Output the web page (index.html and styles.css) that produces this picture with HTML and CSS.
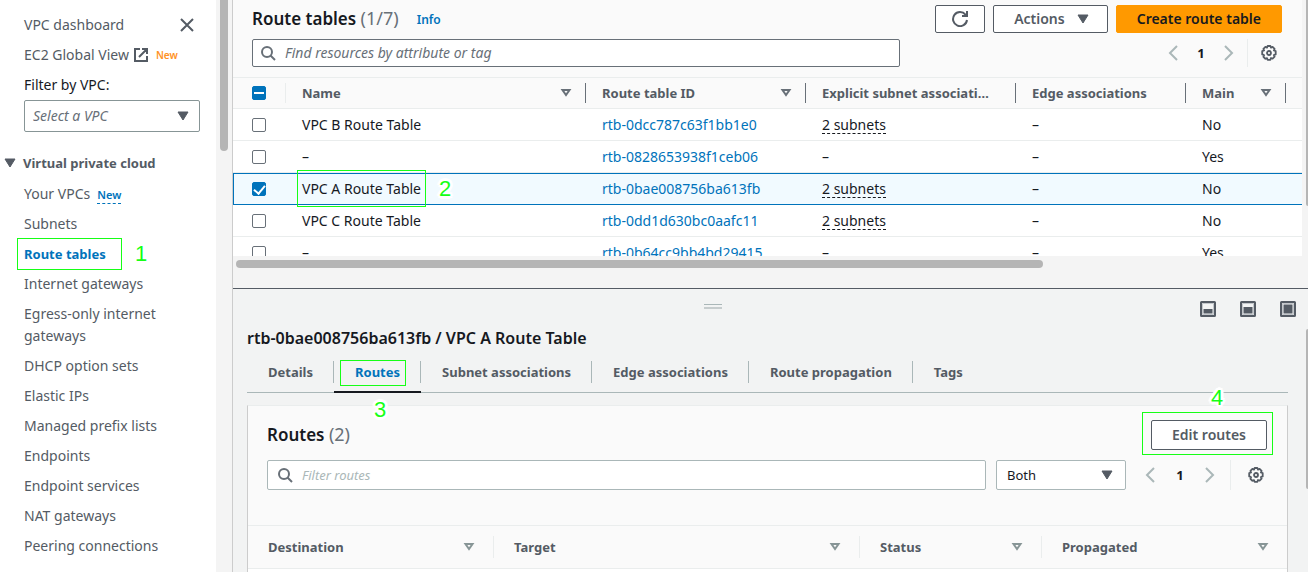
FILE: index.html
```html
<!DOCTYPE html>
<html lang="en">
<head>
<meta charset="utf-8">
<meta name="viewport" content="width=device-width, initial-scale=1">
<title>Route tables | VPC Management Console</title>
<link rel="stylesheet" href="styles.css">
</head>
<body>
<svg class="sprite" aria-hidden="true">
  <symbol id="i-close" viewBox="0 0 16 16"><path d="M2 2l12 12M14 2L2 14" fill="none" stroke="currentColor" stroke-width="2"/></symbol>
  <symbol id="i-external" viewBox="0 0 16 16"><path d="M7 2H2v12h12V9M9 2h5v5M14 2L6 10" fill="none" stroke="currentColor" stroke-width="2"/></symbol>
  <symbol id="i-caret" viewBox="0 0 12 10"><path d="M1 1h10L6 9z" fill="currentColor" stroke="currentColor" stroke-linejoin="round"/></symbol>
  <symbol id="i-sort" viewBox="0 0 12 10"><path d="M2.500 2h7L6 7z" fill="none" stroke="currentColor" stroke-width="2"/></symbol>
  <symbol id="i-search" viewBox="0 0 16 16"><circle cx="7" cy="7" r="5" fill="none" stroke="currentColor" stroke-width="2"/><path d="M10.500 10.500L15 15" stroke="currentColor" stroke-width="2"/></symbol>
  <symbol id="i-refresh" viewBox="0 0 16 16"><path d="M10 5h5V0M15 9a7 7 0 1 1-1.500-5.300l1.500 1.300" fill="none" stroke="currentColor" stroke-width="2"/></symbol>
  <symbol id="i-prev" viewBox="0 0 16 16"><path d="M12 1L5 8l7 7" fill="none" stroke="currentColor" stroke-width="2"/></symbol>
  <symbol id="i-next" viewBox="0 0 16 16"><path d="M4 1l7 7-7 7" fill="none" stroke="currentColor" stroke-width="2"/></symbol>
  <symbol id="i-gear" viewBox="0 0 16 16"><path d="M6.600 1h2.800l.6 1.600 1.600-.7 2 2-.7 1.600 1.800.7v3.200l-1.800.7.700 1.600-2 2-1.600-.7-.6 1.800H6.600L6 13.100l-1.600.7-2-2 .7-1.600L1.200 9.400V6.200l1.900-.7-.7-1.600 2-2 1.600.7z" fill="none" stroke="currentColor" stroke-width="1.800" stroke-linejoin="round"/><circle cx="8" cy="8" r="2" fill="none" stroke="currentColor" stroke-width="1.800"/></symbol>
  <symbol id="i-panel-s" viewBox="0 0 16 16"><rect x="1" y="1" width="14" height="14" rx=".5" fill="none" stroke="currentColor" stroke-width="2"/><path d="M2.500 2.500h11v11h-11z" fill="none" stroke="#c3c7cb"/><path d="M3.500 8h9v4.500h-9z" fill="currentColor"/></symbol>
  <symbol id="i-panel-m" viewBox="0 0 16 16"><rect x="1" y="1" width="14" height="14" rx=".5" fill="none" stroke="currentColor" stroke-width="2"/><path d="M2.500 2.500h11v11h-11z" fill="none" stroke="#c3c7cb"/><path d="M3.500 6h9v6.500h-9z" fill="currentColor"/></symbol>
  <symbol id="i-panel-l" viewBox="0 0 16 16"><rect x="1" y="1" width="14" height="14" rx=".5" fill="none" stroke="currentColor" stroke-width="2"/><path d="M2.500 2.500h11v11h-11z" fill="none" stroke="#c3c7cb"/><path d="M3.500 3.500h9v9h-9z" fill="currentColor"/></symbol>
</svg>

<nav class="sidebar" aria-label="VPC">
  <div class="sidebar-body">
    <div class="sidebar-top">
      <a href="#">VPC dashboard</a>
      <button class="icon-btn" aria-label="Close navigation"><svg class="icon"><use href="#i-close"/></svg></button>
    </div>
    <div class="nav-row"><a href="#">EC2 Global View</a><svg class="icon"><use href="#i-external"/></svg><span class="tag-new">New</span></div>
    <label class="filter-label" for="vpc-filter">Filter by VPC:</label>
    <div class="select">
      <select id="vpc-filter" class="placeholder"><option>Select a VPC</option></select>
      <svg class="caret"><use href="#i-caret"/></svg>
    </div>
    <button class="section-toggle" aria-expanded="true"><svg class="caret"><use href="#i-caret"/></svg>Virtual private cloud</button>
    <ul class="nav-list">
      <li><a href="#">Your VPCs</a><a href="#" class="new-link">New</a></li>
      <li><a href="#">Subnets</a></li>
      <li><a href="#" class="current" aria-current="page">Route tables<span class="mark mark-nav"></span><span class="num num-nav">1</span></a></li>
      <li><a href="#">Internet gateways</a></li>
      <li><a href="#">Egress-only internet gateways</a></li>
      <li><a href="#">DHCP option sets</a></li>
      <li><a href="#">Elastic IPs</a></li>
      <li><a href="#">Managed prefix lists</a></li>
      <li><a href="#">Endpoints</a></li>
      <li><a href="#">Endpoint services</a></li>
      <li><a href="#">NAT gateways</a></li>
      <li><a href="#">Peering connections</a></li>
    </ul>
  </div>
  <div class="track"><div class="thumb"></div></div>
</nav>

<main class="main">
  <section class="list-pane">
    <div class="list-content">
      <header class="list-header">
        <div class="title-row">
          <h1>Route tables <span class="count">(1/7)</span></h1>
          <a href="#" class="info">Info</a>
          <div class="actions">
            <button class="btn refresh" aria-label="Refresh"><svg class="icon"><use href="#i-refresh"/></svg></button>
            <button class="btn with-caret">Actions<svg class="caret"><use href="#i-caret"/></svg></button>
            <button class="btn primary">Create route table</button>
          </div>
        </div>
        <div class="tools">
          <div class="search dark wide">
            <svg class="icon"><use href="#i-search"/></svg>
            <input type="search" aria-label="Find route tables" placeholder="Find resources by attribute or tag">
          </div>
          <div class="pager">
            <button class="icon-btn arrow" aria-label="Previous page"><svg class="icon"><use href="#i-prev"/></svg></button>
            <span class="page">1</span>
            <button class="icon-btn arrow" aria-label="Next page"><svg class="icon"><use href="#i-next"/></svg></button>
            <span class="rule"></span>
            <button class="icon-btn" aria-label="Preferences"><svg class="icon"><use href="#i-gear"/></svg></button>
          </div>
        </div>
      </header>
      <div class="table-clip">
        <table class="tables">
          <colgroup><col class="c-check"><col class="c-name"><col class="c-id"><col class="c-subnet"><col class="c-edge"><col class="c-main"><col></colgroup>
          <thead>
            <tr>
              <th><div class="th light"><input type="checkbox" class="mixed" aria-label="Select all"></div></th>
              <th><div class="th">Name<svg class="sort"><use href="#i-sort"/></svg></div></th>
              <th><div class="th">Route table ID<svg class="sort"><use href="#i-sort"/></svg></div></th>
              <th><div class="th roomy"><span class="cut">Explicit subnet associations</span></div></th>
              <th><div class="th">Edge associations</div></th>
              <th><div class="th">Main<svg class="sort"><use href="#i-sort"/></svg></div></th>
              <th></th>
            </tr>
          </thead>
          <tbody>
            <tr><td><input type="checkbox" aria-label="Select VPC B Route Table"></td><td>VPC B Route Table</td><td><a href="#">rtb-0dcc787c63f1bb1e0</a></td><td><span class="dashed">2 subnets</span></td><td>–</td><td>No</td><td></td></tr>
            <tr><td><input type="checkbox" aria-label="Select rtb-0828653938f1ceb06"></td><td>–</td><td><a href="#">rtb-0828653938f1ceb06</a></td><td>–</td><td>–</td><td>Yes</td><td></td></tr>
            <tr class="selected"><td><input type="checkbox" checked aria-label="Select VPC A Route Table"></td><td><span class="anchor">VPC A Route Table<span class="mark mark-row"></span><span class="num num-row">2</span></span></td><td><a href="#">rtb-0bae008756ba613fb</a></td><td><span class="dashed">2 subnets</span></td><td>–</td><td>No</td><td></td></tr>
            <tr><td><input type="checkbox" aria-label="Select VPC C Route Table"></td><td>VPC C Route Table</td><td><a href="#">rtb-0dd1d630bc0aafc11</a></td><td><span class="dashed">2 subnets</span></td><td>–</td><td>No</td><td></td></tr>
            <tr><td><input type="checkbox" aria-label="Select rtb-0b64cc9bb4bd29415"></td><td>–</td><td><a href="#">rtb-0b64cc9bb4bd29415</a></td><td>–</td><td>–</td><td>Yes</td><td></td></tr>
          </tbody>
        </table>
      </div>
      <div class="h-track"><div class="h-thumb"></div></div>
    </div>
    <div class="edge-track"><div class="edge-thumb"></div></div>
  </section>

  <section class="split">
    <div class="split-bar">
      <div class="grip-area"><button class="grip" aria-label="Resize panel"></button></div>
      <div class="sizes">
        <button class="icon-btn" aria-label="Small panel"><svg class="icon"><use href="#i-panel-s"/></svg></button>
        <button class="icon-btn" aria-label="Medium panel"><svg class="icon"><use href="#i-panel-m"/></svg></button>
        <button class="icon-btn" aria-label="Large panel"><svg class="icon"><use href="#i-panel-l"/></svg></button>
      </div>
    </div>
    <div class="split-scroll">
      <div class="split-content">
        <h2>rtb-0bae008756ba613fb / VPC A Route Table</h2>
        <div class="tabs" role="tablist">
          <button class="tab" role="tab">Details</button>
          <button class="tab active" role="tab" aria-selected="true">Routes<span class="mark mark-tab"></span><span class="num num-tab">3</span></button>
          <button class="tab" role="tab">Subnet associations</button>
          <button class="tab" role="tab">Edge associations</button>
          <button class="tab" role="tab">Route propagation</button>
          <button class="tab" role="tab">Tags</button>
        </div>
        <div class="card">
          <div class="card-head">
            <div class="title-row">
              <h3>Routes <span class="count">(2)</span></h3>
              <div class="anchor actions"><button class="btn tall">Edit routes</button><span class="mark mark-edit"></span><span class="num num-edit">4</span></div>
            </div>
            <div class="tools">
              <div class="search">
                <svg class="icon"><use href="#i-search"/></svg>
                <input type="search" aria-label="Filter routes" placeholder="Filter routes">
              </div>
              <div class="select both">
                <select aria-label="Route type"><option>Both</option></select>
                <svg class="caret"><use href="#i-caret"/></svg>
              </div>
              <div class="pager">
                <button class="icon-btn arrow" aria-label="Previous page"><svg class="icon"><use href="#i-prev"/></svg></button>
                <span class="page">1</span>
                <button class="icon-btn arrow" aria-label="Next page"><svg class="icon"><use href="#i-next"/></svg></button>
                <span class="rule"></span>
                <button class="icon-btn" aria-label="Preferences"><svg class="icon"><use href="#i-gear"/></svg></button>
              </div>
            </div>
          </div>
          <table class="routes">
            <colgroup><col class="r-dest"><col class="r-target"><col class="r-status"><col class="r-prop"></colgroup>
            <thead>
              <tr>
                <th><div class="th light">Destination<svg class="sort"><use href="#i-sort"/></svg></div></th>
                <th><div class="th light">Target<svg class="sort"><use href="#i-sort"/></svg></div></th>
                <th><div class="th light">Status<svg class="sort"><use href="#i-sort"/></svg></div></th>
                <th><div class="th light">Propagated<svg class="sort"><use href="#i-sort"/></svg></div></th>
              </tr>
            </thead>
          </table>
        </div>
      </div>
      <div class="edge-track"><div class="edge-thumb low"></div></div>
    </div>
  </section>
</main>
</body>
</html>
```
FILE: styles.css
```css
* { box-sizing: border-box; }

body {
  margin: 0;
  height: 100vh;
  display: flex;
  overflow: hidden;
  background: #f4f4f4;
  color: #16191f;
  font: 14px/22px "Noto Sans", "Open Sans", sans-serif;
}

button, input, select { font: inherit; color: inherit; }
button { cursor: pointer; }
a { color: #0073bb; text-decoration: none; }
.sprite { display: none; }
.icon { width: 16px; height: 16px; display: block; flex: none; }
.caret, .sort { width: 12px; height: 10px; flex: none; display: block; color: #545b64; }
.sort { color: #687078; }
.icon-btn { border: 0; padding: 0; background: none; color: #545b64; }
.anchor { position: relative; }

/* Sidebar */
.sidebar { flex: none; width: 232px; display: flex; background: #fff; }
.sidebar-body { flex: 1; padding: 14px 16px 0 24px; }
.sidebar a { color: #545b64; }
.sidebar-top { display: flex; justify-content: space-between; align-items: center; margin-bottom: 8px; padding-right: 5px; }
.nav-row { display: flex; align-items: center; gap: 4px; margin-bottom: 8px; color: #545b64; }
.tag-new { color: #ff9224; font-size: 10px; font-weight: 600; margin-left: 3px; }
.filter-label { display: block; margin-bottom: 4px; }

.select { position: relative; background: #fff; border: 1px solid #879596; border-radius: 2px; height: 32px; }
.select select { appearance: none; width: 100%; height: 100%; border: 0; background: none; padding: 0 30px 0 8px; }
.select .caret { position: absolute; right: 10px; top: 10px; pointer-events: none; }
.placeholder { font-style: italic; }
.select .placeholder { color: #687078; }

.section-toggle { display: flex; align-items: center; gap: 7px; margin: 20px 0 9px -20px; padding: 0; border: 0; background: none; color: #545b64; font-size: 13px; font-weight: 700; }
.nav-list { list-style: none; margin: 0; padding: 0; display: grid; gap: 8px; }
.nav-list .new-link { margin-left: 7px; color: #0073bb; font-size: 11px; line-height: 12px; font-weight: 600; border-bottom: 1px dashed; padding-bottom: 1px; }
.nav-list .current { position: relative; color: #0073bb; font-size: 13px; font-weight: 700; }
.track { width: 16px; padding: 0 4px; background: #f4f4f4; }
.thumb { height: 151px; background: #b5b5b5; border-radius: 0 0 4px 4px; }

/* Callouts */
.mark { position: absolute; border: 1px solid #16ff16; pointer-events: none; }
.num {
  position: absolute;
  color: #16ff16;
  font: 22px/24px "Liberation Sans", Arial, sans-serif;
  text-shadow: 2px 0 #fff, -2px 0 #fff, 0 2px #fff, 0 -2px #fff, 2px 2px #fff, -2px -2px #fff, 2px -2px #fff, -2px 2px #fff, 3px 0 1px #fff, -3px 0 1px #fff, 0 3px 1px #fff, 0 -3px 1px #fff;
  pointer-events: none;
}
.mark-nav { left: -7px; top: -7px; width: 105px; height: 32px; }
.num-nav { left: 111px; top: -3px; }
.mark-row { left: -5px; top: -9px; width: 129px; height: 37px; }
.num-row { left: 137px; top: -2px; }
.mark-tab { left: 6px; top: 4px; width: 66px; height: 26px; }
.num-tab { left: 40px; top: 42px; }
.mark-edit { left: -9px; right: -6px; top: -8px; bottom: -5px; }
.num-edit { left: 60px; top: -34px; }

/* Main column */
.main { flex: 1; min-width: 0; display: flex; flex-direction: column; border-left: 1px solid #ccc; }
.list-pane { display: flex; }
.list-content { flex: 1; min-width: 0; }
.list-header { background: #fafafa; padding: 5px 20px 10px 19px; }
.title-row { display: flex; align-items: center; }
h1, h3 { margin: 0; font-size: 17px; font-weight: 600; line-height: 28px; }
.count { font-size: 18px; line-height: 20px; font-weight: 400; color: #687078; }
.info { margin: 2px 0 0 18px; font-size: 12px; font-weight: 600; }
.actions { display: flex; gap: 8px; margin-left: auto; }
.btn { height: 28px; padding: 0 20px; display: flex; align-items: center; gap: 12px; border: 1px solid #545b64; border-radius: 2px; background: #fff; color: #545b64; font-weight: 600; }
.btn.refresh { padding: 0 16px; }
.btn.primary { background: #ff9900; border-color: #ff9900; color: #16191f; }
.btn.with-caret { padding-right: 18px; }
.btn.tall { height: 30px; }

.tools { display: flex; align-items: center; margin-top: 6px; }
.search { flex: 1; min-width: 0; height: 30px; display: flex; align-items: center; gap: 9px; padding: 0 9px; border: 1px solid #aab7b8; border-radius: 2px; background: #fff; color: #687078; }
.search.dark { border-color: #687078; height: 28px; padding-left: 7px; }
.search.wide { max-width: 648px; }
.search input { flex: 1; min-width: 0; border: 0; padding: 0; background: none; outline: 0; color: #16191f; }
.search input::placeholder { font-style: italic; color: #aab7b8; opacity: 1; }
.search:not(.dark) input { font-size: 13px; }
.search.dark input::placeholder { color: #687078; }
.pager { display: flex; align-items: center; margin-left: auto; padding: 0 5px 0 16px; }
.arrow { color: #aab7b8; }
.page { width: 40px; text-align: center; font-weight: 700; font-size: 13px; }
.rule { width: 1px; height: 28px; margin: 0 13px 0 10px; background: #eaeded; }

/* Tables */
table { border-collapse: separate; border-spacing: 0; table-layout: fixed; width: 100%; }
th, td { padding: 0; text-align: left; }
th { font-size: 13px; font-weight: 700; color: #545b64; background: #fafafa; border: solid #eaeded; border-width: 1px 0; }
.th { display: flex; align-items: center; justify-content: space-between; height: 20px; padding: 0 13px 0 16px; border-right: 1px solid #687078; }
.th.light { border-color: #eaeded; }
.th.roomy { padding-right: 20px; }
.cut { overflow: hidden; text-overflow: ellipsis; white-space: nowrap; }
.table-clip { height: 179px; overflow: hidden; background: #fff; }
.tables th { height: 32px; }
.tables td { height: 32px; padding: 0 16px; border-bottom: 1px solid #eaeded; white-space: nowrap; }
.tables th:first-child .th, .tables td:first-child { padding-left: 19px; }
.tables .selected td { background: #f1faff; border-color: #0073bb; border-top: 1px solid #0073bb; }
.tables .selected td:first-child { border-left: 1px solid #0073bb; padding-left: 18px; }
.c-check { width: 53px; }
.c-name { width: 300px; }
.c-id { width: 220px; }
.c-subnet { width: 210px; }
.c-edge { width: 170px; }
.c-main { width: 100px; }
.dashed { border-bottom: 1px dashed #16191f; line-height: 16px; display: inline-block; }

input[type="checkbox"] { appearance: none; display: grid; place-items: center; width: 14px; height: 14px; margin: 0; border: 1px solid #687078; border-radius: 2px; background: #fff; }
input.mixed, input[type="checkbox"]:checked { background: #0073bb; border-color: #0073bb; }
.mixed::before { content: ""; width: 10px; height: 2px; background: #fff; }
input:checked::before { content: ""; width: 5px; height: 9px; margin-bottom: 2px; border: solid #fff; border-width: 0 2px 2px 0; transform: rotate(40deg); }

/* Scrollbars */
.h-track { height: 32px; padding: 4px 0 0 3px; }
.h-thumb { width: 76%; max-width: 807px; height: 8px; border-radius: 4px; background: #b5b5b5; }
.edge-track { flex: none; width: 6px; padding-left: 4px; }
.edge-thumb { height: 206px; background: #b5b5b5; border-radius: 0 0 0 4px; }
.edge-thumb.low { height: 160px; border-radius: 4px 0 0 4px; }

/* Split panel */
.split { flex: 1; min-height: 0; display: flex; flex-direction: column; border-top: 1px solid #545b64; background: #f2f3f3; }
.split-bar { display: flex; align-items: center; gap: 8px; height: 40px; padding-right: 12px; }
.grip-area { flex: 1; display: flex; justify-content: center; }
.grip { width: 18px; height: 5px; margin: 0 0 5px; padding: 0; background: none; border: solid #aab7b8; border-width: 1px 0 2px; border-bottom-color: #c6cccd; }
.sizes { display: flex; gap: 24px; }
.split-scroll { flex: 1; min-height: 0; display: flex; overflow: hidden; }
.split-content { flex: 1; min-width: 0; padding: 0 14px; }
h2 { margin: 0; font-size: 16px; line-height: 18px; font-weight: 600; }
.tabs { display: flex; margin-top: 9px; height: 37px; border-bottom: 1px solid #aab7b8; }
.tab { position: relative; height: 37px; padding: 4px 21px 7px; border: 0; border-bottom: 2px solid transparent; background: none; color: #545b64; font-size: 13px; font-weight: 700; }
.tab.active { color: #0073bb; border-color: #16191f; }
.tab:not(:last-child)::after { content: ""; position: absolute; right: 0; top: 5px; height: 22px; width: 1px; background: #aab7b8; }
.card { margin-top: 12px; background: #fff; border: 1px solid #ccc; border-top-color: #eaeded; border-bottom: 0; height: 300px; }
.card-head { background: #fafafa; padding: 14px 20px 35px 19px; }
.card-head .tools { margin-top: 10px; }
.card-head .pager { padding-right: 3px; }
.card-head .page { width: 44px; }
.card-head .rule { height: 30px; margin: 0 17px 0 12px; }
.select.both { width: 130px; height: 30px; margin-left: 10px; border-color: #aab7b8; }
.select.both select { padding-left: 10px; font-size: 13px; }
.both .caret { right: 12px; top: 9px; }
.routes th { height: 44px; }
.routes .sort { color: #879596; }
.routes .th { height: 22px; padding: 0 18px 0 20px; }
.routes th:last-child .th { border: 0; }
.r-dest { width: 246px; }
.r-target { width: 366px; }
.r-status { width: 182px; }
```
